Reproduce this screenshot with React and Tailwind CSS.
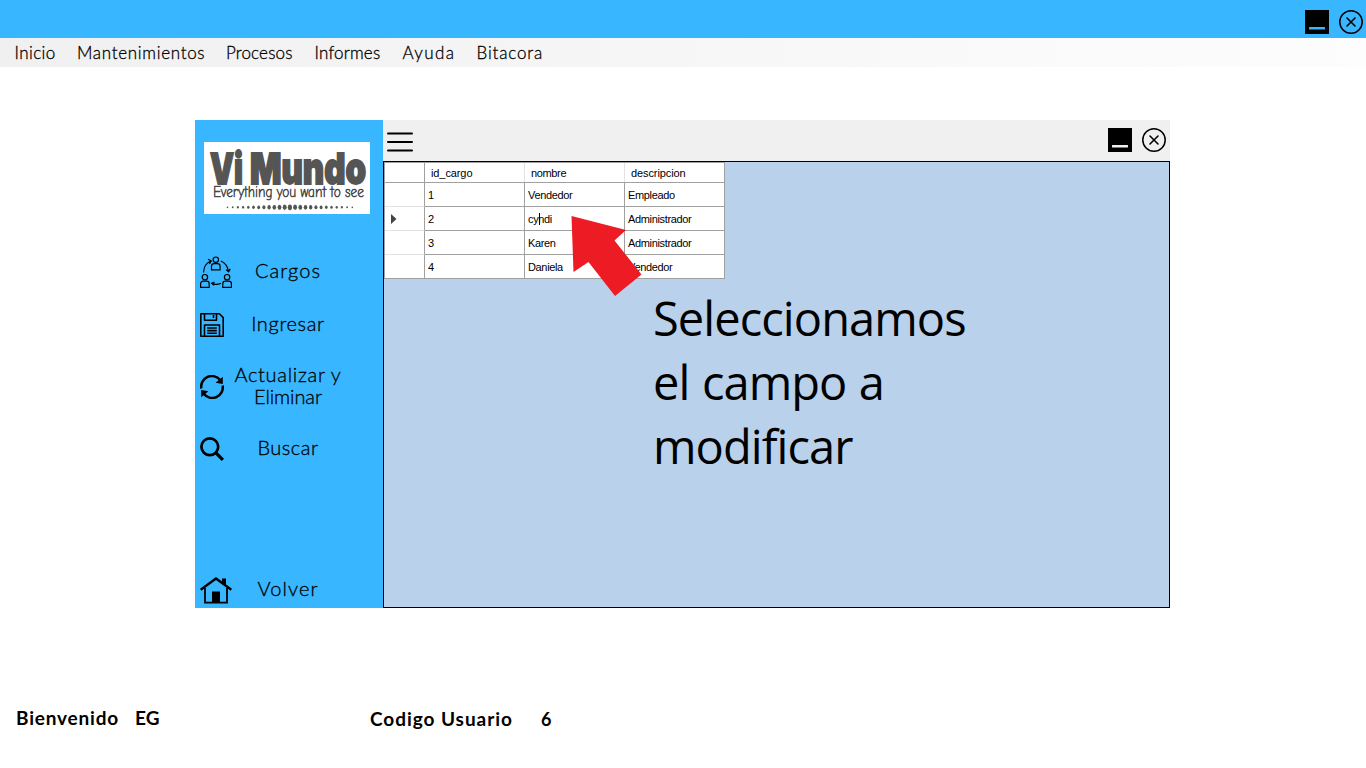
const menu = [
  ['Inicio', 'w-[62.5px] tracking-[0.4px]'],
  ['Mantenimientos', 'w-[149px] tracking-[0.7px]'],
  ['Procesos', 'w-[88.5px] tracking-[0.15px]'],
  ['Informes', 'w-[88px] tracking-[0.2px]'],
  ['Ayuda', 'w-[74px] tracking-[1.4px]'],
  ['Bitacora', 'w-[80px] tracking-[0.85px]'],
];

const rows = [
  ['1', 'Vendedor', 'Empleado'],
  ['2', 'cyndi', 'Administrador'],
  ['3', 'Karen', 'Administrador'],
  ['4', 'Daniela', 'Vendedor'],
];

function WindowButtons({ bar }) {
  return (
    <div className="flex gap-[10px]">
      <svg width="24" height="24" viewBox="0 0 24 24">
        <rect width="24" height="24" fill="#000" />
        <rect x="4" y="17" width="16" height="2.6" rx="0.5" fill={bar} />
      </svg>
      <svg width="24" height="24" viewBox="0 0 24 24" fill="none" stroke="#000" strokeLinecap="round">
        <circle cx="12" cy="12" r="11.2" strokeWidth="1.5" />
        <path d="M8 8l8 8M16 8l-8 8" strokeWidth="1.6" />
      </svg>
    </div>
  );
}

function Logo() {
  const dots = Array.from({ length: 25 }, (_, i) => i);
  return (
    <svg className="mt-[22px] ml-[9px] shrink-0 bg-white" width="166" height="72" viewBox="0 0 166 72">
      <g fill="#555" stroke="#555" strokeWidth="1.8" fontFamily="Inter, sans-serif" fontWeight="900" fontSize="43">
        <text x="6" y="42" textLength="33" lengthAdjust="spacingAndGlyphs">Vi</text>
        <text x="46" y="42" textLength="116" lengthAdjust="spacingAndGlyphs">Mundo</text>
      </g>
      <text x="9" y="55" textLength="151" lengthAdjust="spacingAndGlyphs" fill="#444" stroke="#444" strokeWidth="0.6" fontFamily="Comic Neue, Comic Sans MS, cursive" fontSize="16">Everything you want to see</text>
      {dots.map((i) => (
        <ellipse key={i} cx={23.5 + i * 5.2} cy="65.3" rx={2.1 - Math.abs(i - 12) * 0.11} ry={2.9 - Math.abs(i - 12) * 0.17} fill="#555" />
      ))}
    </svg>
  );
}

function PeopleIcon() {
  const person = (x, y) => (
    <g key={x}>
      <circle cx={x} cy={y} r="2.7" />
      <path d={`M${x - 4.3} ${y + 10.2}v-3.6a2.6 2.6 0 0 1 2.6-2.6h3.4a2.6 2.6 0 0 1 2.6 2.6v3.6z`} />
    </g>
  );
  return (
    <svg width="32" height="33" viewBox="0 0 32 33" fill="none" stroke="#000" strokeWidth="1.2" strokeLinejoin="round">
      {person(15.8, 3.7)}
      {person(4.9, 21.2)}
      {person(27.1, 21.2)}
      <path d="M3.6 16.5C3.8 10.5 6.4 6.8 10.7 5M8 3.2l3.2 1.7-1.8 3.1M20.8 5c4.4 1.7 6.8 5.3 7.7 10.6M26 13.6l2.6 2.3 1.6-3M21 27.3c-3.2 1.5-6.2 1.5-9 0M14.2 29.2l-2.7-2 3-1.1" />
    </svg>
  );
}

function SaveIcon() {
  return (
    <svg width="24" height="24" viewBox="0 0 24 24" fill="none" stroke="#000" strokeWidth="1.6" strokeLinejoin="round">
      <path d="M.8.8h18.6L23.2 4.6v18.6H.8z" />
      <path d="M4.5.8v6.500h12V.8M13.5 2v3M4.5 23V12h15v11M7.2 15h9.6M7.2 17.6h9.6M7.2 20.2h9.6" />
    </svg>
  );
}

function RefreshIcon() {
  return (
    <svg width="24" height="24" viewBox="0 0 24 24">
      <path d="M1.3 13.5A10.7 10.7 0 0 1 20.3 5.2M22.7 10.5A10.7 10.7 0 0 1 3.7 18.8" fill="none" stroke="#000" strokeWidth="2.5" />
      <path d="M22.8 1.8v7.2l-7.2-1.2zM1.2 22.2V15l7.2 1.2z" />
    </svg>
  );
}

function SearchIcon() {
  return (
    <svg width="24" height="24" viewBox="0 0 24 24" fill="none" stroke="#000">
      <circle cx="9.8" cy="9.8" r="8.4" strokeWidth="2.7" />
      <path d="M15.7 15.7l7.2 7.2" strokeWidth="3.2" />
    </svg>
  );
}

function HomeIcon() {
  return (
    <svg width="32" height="27" viewBox="0 0 32 27">
      <path d="M5 11v14.7h22V11" fill="none" stroke="#000" strokeWidth="1.8" />
      <path d="M.6 12.7L16 1.6l15.4 11.1" fill="none" stroke="#000" strokeWidth="2.4" />
      <path d="M22 1.5h4v8l-4-3zM12 14.5h8V26h-8z" />
    </svg>
  );
}

function NavItem({ icon, children, className }) {
  return (
    <div className={`flex items-center pl-[5px] ${className}`}>
      <div className="flex w-8 shrink-0">{icon}</div>
      <div className="-ml-[3px] w-[118px] pb-1 text-center text-[20px] leading-[22px] whitespace-nowrap">{children}</div>
    </div>
  );
}

function Table() {
  return (
    <div className="w-[341px] border-t border-l border-[#a0a0a0] bg-white font-['Liberation_Sans',sans-serif] text-[11px] tracking-[-0.35px]">
      <div className="flex h-5 items-center border-b border-[#a0a0a0] leading-[21px]">
        <div className="h-full w-10 border-r border-[#a0a0a0]" />
        <div className="h-full w-[100px] border-r border-[#e3e3e3] pl-[6px] tracking-[-0.1px]">id_cargo</div>
        <div className="h-full w-[100px] border-r border-[#e3e3e3] pl-[6px] tracking-[-0.35px]">nombre</div>
        <div className="h-full w-[100px] border-r border-[#a0a0a0] pl-[6px] tracking-[-0.1px]">descripcion</div>
      </div>
      {rows.map((row, i) => (
        <div key={row[0]} className="flex h-6 leading-[25px]">
          <div className={`flex w-10 items-center border-r border-b border-r-[#a0a0a0] pl-[6px] ${i === 3 ? 'border-b-[#a0a0a0]' : 'border-b-[#e3e3e3]'}`}>
            {i === 1 && (
              <svg className="mt-px" width="6" height="10" viewBox="0 0 6 10"><path d="M0 0l5.5 5L0 10z" fill="#444" /></svg>
            )}
          </div>
          {row.map((cell, c) => (
            <div key={c} className="w-[100px] border-r border-b border-[#a0a0a0] pl-[3px]">
              {cell === 'cyndi' ? (
                <span className="relative">cyndi<span className="absolute top-0 left-[11px] h-3 w-px bg-black" /></span>
              ) : cell}
            </div>
          ))}
        </div>
      ))}
    </div>
  );
}

export default function App() {
  return (
    <div className="flex h-[768px] w-[1366px] flex-col overflow-hidden bg-white font-[Lato,sans-serif] text-black">
      <header className="flex h-[38px] shrink-0 justify-end bg-[#38b6ff] pt-[10px] pr-[3px]">
        <WindowButtons bar="#38b6ff" />
      </header>
      <nav className="flex h-[29px] shrink-0 items-center bg-linear-to-r from-[#f0f0f0] to-[#fdfdfd] pl-[14.5px] text-[17px] font-light [-webkit-text-stroke:0.3px_black]">
        {menu.map(([label, cls]) => <span key={label} className={cls}>{label}</span>)}
      </nav>
      <main className="mt-[53px] ml-[195px] flex h-[488px] w-[975px] shrink-0">
        <aside className="flex w-[188px] shrink-0 flex-col bg-[#38b6ff] font-light">
          <Logo />
          <div className="flex grow flex-col [-webkit-text-stroke:0.3px_black]">
            <NavItem className="mt-[41px] h-[34px]" icon={<PeopleIcon />}><span className="tracking-[1.1px]">Cargos</span></NavItem>
            <NavItem className="mt-[19px] h-[34px]" icon={<SaveIcon />}><span className="tracking-[0.65px]">Ingresar</span></NavItem>
            <NavItem className="mt-[23px] h-11" icon={<RefreshIcon />}>
              <span className="tracking-[0.7px]">Actualizar y</span><br /><span className="tracking-[-0.1px]">Eliminar</span>
            </NavItem>
            <NavItem className="mt-[23px] h-[34px]" icon={<SearchIcon />}><span className="tracking-[0.5px]">Buscar</span></NavItem>
            <NavItem className="mt-auto h-[36px]" icon={<HomeIcon />}><span className="tracking-[1.1px]">Volver</span></NavItem>
          </div>
        </aside>
        <section className="flex grow flex-col">
          <div className="flex h-[41px] shrink-0 items-start justify-between bg-[#f0f0f0] pt-2 pr-1 pl-1">
            <svg className="mt-1" width="26" height="21" viewBox="0 0 26 21" stroke="#000" strokeWidth="2" strokeLinecap="round">
              <path d="M1 1.5h24M1 10h24M1 18.5h24" />
            </svg>
            <WindowButtons bar="#f0f0f0" />
          </div>
          <div className="relative grow border border-black bg-[#b9d1ea]">
            <Table />
            <svg className="absolute top-[54px] left-[187px]" width="71" height="82" viewBox="0 0 71 82">
              <path d="M.5 0L55 14 43.5 24.5 70.5 58.5 44 80 17.5 46 2.5 56z" fill="#ed1c24" />
            </svg>
            <p className="mt-[7px] ml-[269px] w-[340px] font-['Open_Sans',sans-serif] text-[47px] leading-[64px] tracking-[-0.93px] whitespace-nowrap [word-spacing:1.2px]">
              Seleccionamos<br />el campo a<br />modificar
            </p>
          </div>
        </section>
      </main>
      <footer className="mt-[98px] flex pl-4 text-[19px] leading-6 font-bold">
        <span className="w-[119px] tracking-[0.8px]">Bienvenido</span>
        <span className="w-[235px]">EG</span>
        <span className="w-[171px] pt-px tracking-[0.95px]">Codigo Usuario</span>
        <span className="pt-px text-lg leading-6">6</span>
      </footer>
    </div>
  );
}
